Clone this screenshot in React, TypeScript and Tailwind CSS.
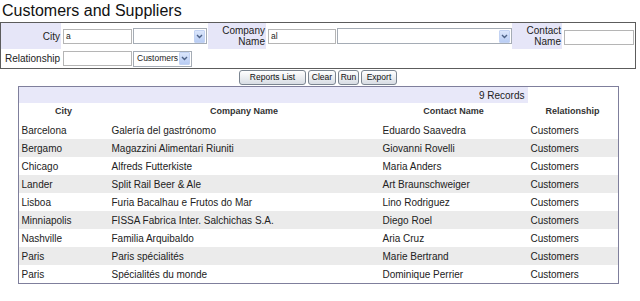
import React from "react";

const rows = [
  ["Barcelona", "Galería del gastrónomo", "Eduardo Saavedra", "Customers"],
  ["Bergamo", "Magazzini Alimentari Riuniti", "Giovanni Rovelli", "Customers"],
  ["Chicago", "Alfreds Futterkiste", "Maria Anders", "Customers"],
  ["Lander", "Split Rail Beer & Ale", "Art Braunschweiger", "Customers"],
  ["Lisboa", "Furia Bacalhau e Frutos do Mar", "Lino Rodriguez", "Customers"],
  ["Minniapolis", "FISSA Fabrica Inter. Salchichas S.A.", "Diego Roel", "Customers"],
  ["Nashville", "Familia Arquibaldo", "Aria Cruz", "Customers"],
  ["Paris", "Paris spécialités", "Marie Bertrand", "Customers"],
  ["Paris", "Spécialités du monde", "Dominique Perrier", "Customers"],
];

function Arrow() {
  return (
    <div className="w-[11px] h-[13px] mr-[1px] flex items-center justify-center rounded-[1px] bg-gradient-to-b from-[#dbe6fb] to-[#b9cdf4] border border-[#c3d3f3]">
      <svg width="7" height="5" viewBox="0 0 7 5">
        <path d="M1 1 L3.5 3.5 L6 1" fill="none" stroke="#4d6185" strokeWidth="1.4" />
      </svg>
    </div>
  );
}

function Select({ width, value }: { width: string; value?: string }) {
  return (
    <div className={`${width} h-[16px] border border-[#a5acb5] bg-white flex items-center justify-between`}>
      <span className="pl-[3px] text-[8.5px] text-[#222]">{value}</span>
      <Arrow />
    </div>
  );
}

function Input({ width, value, className }: { width: string; value?: string; className?: string }) {
  return (
    <div className={`${width} h-[15px] border border-[#b5b5b5] bg-white flex items-center pl-[2px] text-[8.5px] text-[#222] ${className ?? ""}`}>
      {value}
    </div>
  );
}

function Btn({ label, width }: { label: string; width: string }) {
  return (
    <div className={`${width} h-[15px] rounded-[3px] border border-[#7b8591] bg-gradient-to-b from-[#ffffff] to-[#d8dde4] flex items-center justify-center text-[8.5px] text-[#111]`}>
      {label}
    </div>
  );
}

export default function App() {
  return (
    <div className="w-[640px] h-[301px] bg-white font-['Liberation_Sans',Arial,sans-serif] text-[#222]">
      <div className="w-[636px]">
        {/* titre */}
        <div className="h-[22px] pl-[2px] text-[16px] leading-[21px] text-[#111]">Customers and Suppliers</div>

        {/* filtres */}
        <div className="h-[47px] border border-[#5c5c5c] flex flex-col">
          <div className="flex h-[26px] items-stretch">
            <div className="w-[60px] bg-[#e6e6f8] flex items-center justify-end pr-[1px] text-[10px]">City</div>
            <div className="flex items-center ml-[2px]">
              <Input width="w-[69px]" value="a" />
            </div>
            <div className="flex items-center ml-[1px]">
              <Select width="w-[74px]" />
            </div>
            <div className="w-[58px] ml-[1px] bg-[#e6e6f8] flex flex-col items-end justify-center pr-[1px] text-[10px] leading-[11px]">
              <span>Company</span>
              <span>Name</span>
            </div>
            <div className="flex items-center ml-[2px]">
              <Input width="w-[68px]" value="al" />
            </div>
            <div className="flex items-center ml-[1px]">
              <Select width="w-[175px]" />
            </div>
            <div className="w-[50px] bg-[#e6e6f8] flex flex-col items-end justify-center pr-[1px] text-[10px] leading-[11px]">
              <span>Contact</span>
              <span>Name</span>
            </div>
            <div className="flex items-center ml-[2px]">
              <Input width="w-[70px]" className="mt-[3px]" />
            </div>
          </div>
          <div className="flex h-[19px] items-center">
            <div className="w-[60px] flex justify-end pr-[1px] text-[10px]">Relationship</div>
            <Input width="w-[69px]" className="ml-[2px]" />
            <div className="ml-[1px]">
              <Select width="w-[59px]" value="Customers" />
            </div>
          </div>
        </div>

        {/* boutons */}
        <div className="flex justify-center gap-[2px] mt-[1px] h-[15px]">
          <Btn label="Reports List" width="w-[67px]" />
          <Btn label="Clear" width="w-[28px]" />
          <Btn label="Run" width="w-[21px]" />
          <Btn label="Export" width="w-[36px]" />
        </div>

        {/* résultats */}
        <div className="mx-auto mt-[1px] w-[601px] border border-[#7f7f9c] text-[10px]">
          <div className="grid grid-cols-[90px_271px_148px_90px] h-[16px]">
            <div className="col-span-3 bg-[#e8e8f9] flex items-center justify-end pr-[3px]">9 Records</div>
            <div />
          </div>
          <div className="grid grid-cols-[90px_271px_148px_90px] h-[18px] items-center text-[9px] font-bold text-[#333] text-center">
            <div>City</div>
            <div>Company Name</div>
            <div>Contact Name</div>
            <div>Relationship</div>
          </div>
          {rows.map((r, i) => (
            <div
              key={i}
              className={`grid grid-cols-[90px_271px_148px_90px] h-[18px] items-center ${i % 2 === 1 ? "bg-[#ebebeb]" : "bg-white"}`}
            >
              <div className="pl-[3px]">{r[0]}</div>
              <div className="pl-[3px]">{r[1]}</div>
              <div className="pl-[3px]">{r[2]}</div>
              <div className="pl-[3px]">{r[3]}</div>
            </div>
          ))}
        </div>
      </div>
    </div>
  );
}
